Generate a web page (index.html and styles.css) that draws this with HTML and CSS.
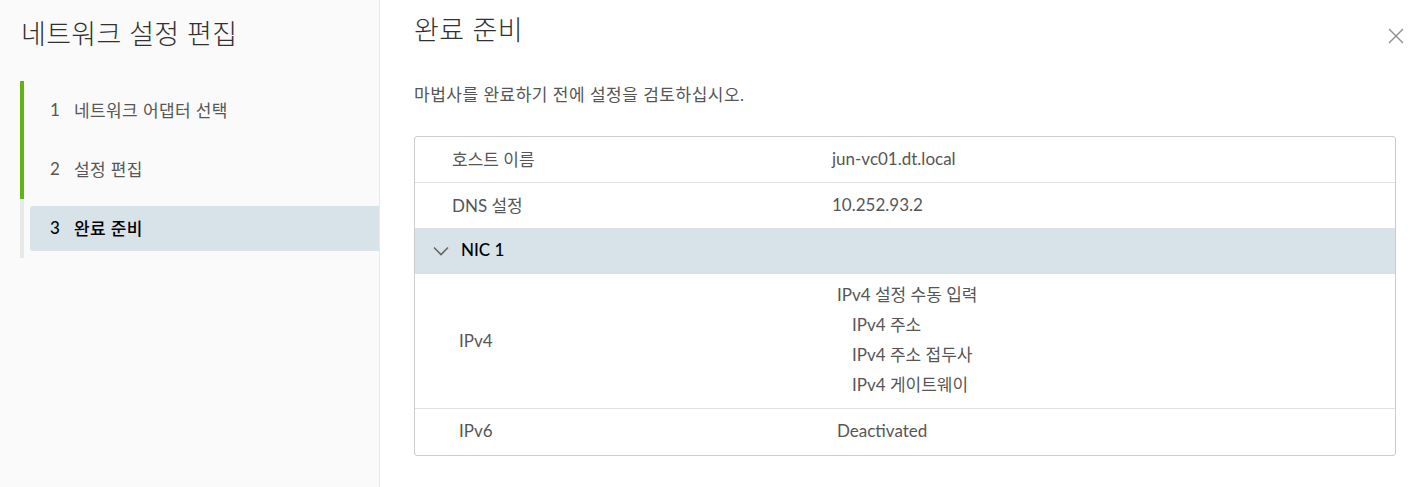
FILE: index.html
```html
<!DOCTYPE html>
<html lang="ko">
<head>
<meta charset="utf-8">
<title>네트워크 설정 편집</title>
<link rel="stylesheet" href="styles.css">
</head>
<body>
<div class="wizard">
  <aside class="side">
    <h1 class="side-title">네트워크 설정 편집</h1>
    <ol class="steps">
      <li class="step done"><div class="step-btn"><span class="num">1</span><span>네트워크 어댑터 선택</span></div></li>
      <li class="step done"><div class="step-btn"><span class="num">2</span><span>설정 편집</span></div></li>
      <li class="step active"><div class="step-btn"><span class="num">3</span><span>완료 준비</span></div></li>
    </ol>
  </aside>
  <main class="content">
    <header class="content-head">
      <h2 class="content-title">완료 준비</h2>
      <button class="close" aria-label="닫기">
        <svg width="16" height="16" viewBox="0 0 16 16"><path d="M1 1L15 15M15 1L1 15" stroke="#8c8c8c" stroke-width="1.4" fill="none"/></svg>
      </button>
    </header>
    <p class="desc">마법사를 완료하기 전에 설정을 검토하십시오.</p>
    <div class="summary">
      <div class="row">
        <div class="label">호스트 이름</div>
        <div class="value">jun-vc01.dt.local</div>
      </div>
      <div class="row">
        <div class="label">DNS 설정</div>
        <div class="value">10.252.93.2</div>
      </div>
      <div class="row group">
        <svg class="chev" width="16" height="10" viewBox="0 0 16 10"><path d="M1 1.5L8 8.5L15 1.5" stroke="#666" stroke-width="1.6" fill="none"/></svg>
        <span class="group-name">NIC 1</span>
      </div>
      <div class="row sub tall">
        <div class="label">IPv4</div>
        <div class="value">
          <div class="line">IPv4 설정 수동 입력</div>
          <div class="line indent">IPv4 주소</div>
          <div class="line indent">IPv4 주소 접두사</div>
          <div class="line indent">IPv4 게이트웨이</div>
        </div>
      </div>
      <div class="row sub">
        <div class="label">IPv6</div>
        <div class="value">Deactivated</div>
      </div>
    </div>
  </main>
</div>
</body>
</html>
```

FILE: styles.css
```css
* { box-sizing: border-box; }
html, body { margin: 0; padding: 0; }
body {
  font-family: Lato, "Noto Sans CJK KR", sans-serif;
  color: #565656;
  background: #fff;
}
.wizard {
  display: flex;
  height: 487px;
}
.side {
  width: 380px;
  flex: none;
  background: #fafafa;
  border-right: 1px solid #e8e8e8;
  padding: 14px 0 0 20px;
}
.side-title {
  margin: 0 0 0 1px;
  font-size: 27px;
  font-weight: 300;
  letter-spacing: 0.3px;
  line-height: 40px;
  color: #313131;
}
.steps {
  list-style: none;
  margin: 27px 0 0 0;
  padding: 0;
}
.step {
  height: 59px;
  border-left: 4px solid #e8e8e8;
  padding: 7px 0 7px 6px;
}
.step.done { border-left-color: #60b515; }
.step-btn {
  height: 45px;
  display: flex;
  align-items: center;
  padding: 0 0 2px 20px;
  font-size: 17px;
  letter-spacing: 0.4px;
  color: #565656;
  border-radius: 3px 0 0 3px;
}
.num { width: 24px; }
.step.active .step-btn {
  background: #d8e3e9;
  color: #000;
  font-weight: 500;
}
.content {
  flex: 1;
  padding: 0 32px 0 34px;
}
.content-head {
  display: flex;
  justify-content: space-between;
  align-items: flex-start;
  height: 60px;
}
.content-title {
  margin: 10px 0 0 0;
  font-size: 27px;
  font-weight: 300;
  letter-spacing: 0.5px;
  line-height: 40px;
  color: #313131;
}
.close {
  margin: 28px -8px 0 0;
  border: 0;
  background: none;
  padding: 0;
  width: 16px;
  height: 16px;
  display: block;
}
.desc {
  margin: 22px 0 0 0;
  font-size: 17px;
  letter-spacing: 0.5px;
  line-height: 26px;
  color: #565656;
}
.summary {
  margin-top: 28px;
  border: 1px solid #ccc;
  border-radius: 3px;
  overflow: hidden;
}
.row {
  display: flex;
  align-items: center;
  height: 46px;
  border-top: 1px solid #e0e0e0;
  font-size: 17px;
  padding-bottom: 3px;
}
.row:first-child { border-top: 0; height: 45px; }
.label {
  width: 417px;
  padding-left: 37px;
  flex: none;
}
.value { color: #565656; }
.row.group {
  background: #d8e3e9;
  border-top: 0;
  padding-left: 18px;
  color: #000;
  font-weight: 500;
}
.chev { margin-right: 12px; margin-top: 3px; }
.row.sub { border-top: 0; }
.row.sub .label { padding-left: 44px; width: 422px; }
.row.tall {
  height: 135px;
  border-bottom: 1px solid #e0e0e0;
  padding-top: 0;
  padding-bottom: 2px;
}
.line { line-height: 30px; }
.line.indent { padding-left: 15px; }
```
